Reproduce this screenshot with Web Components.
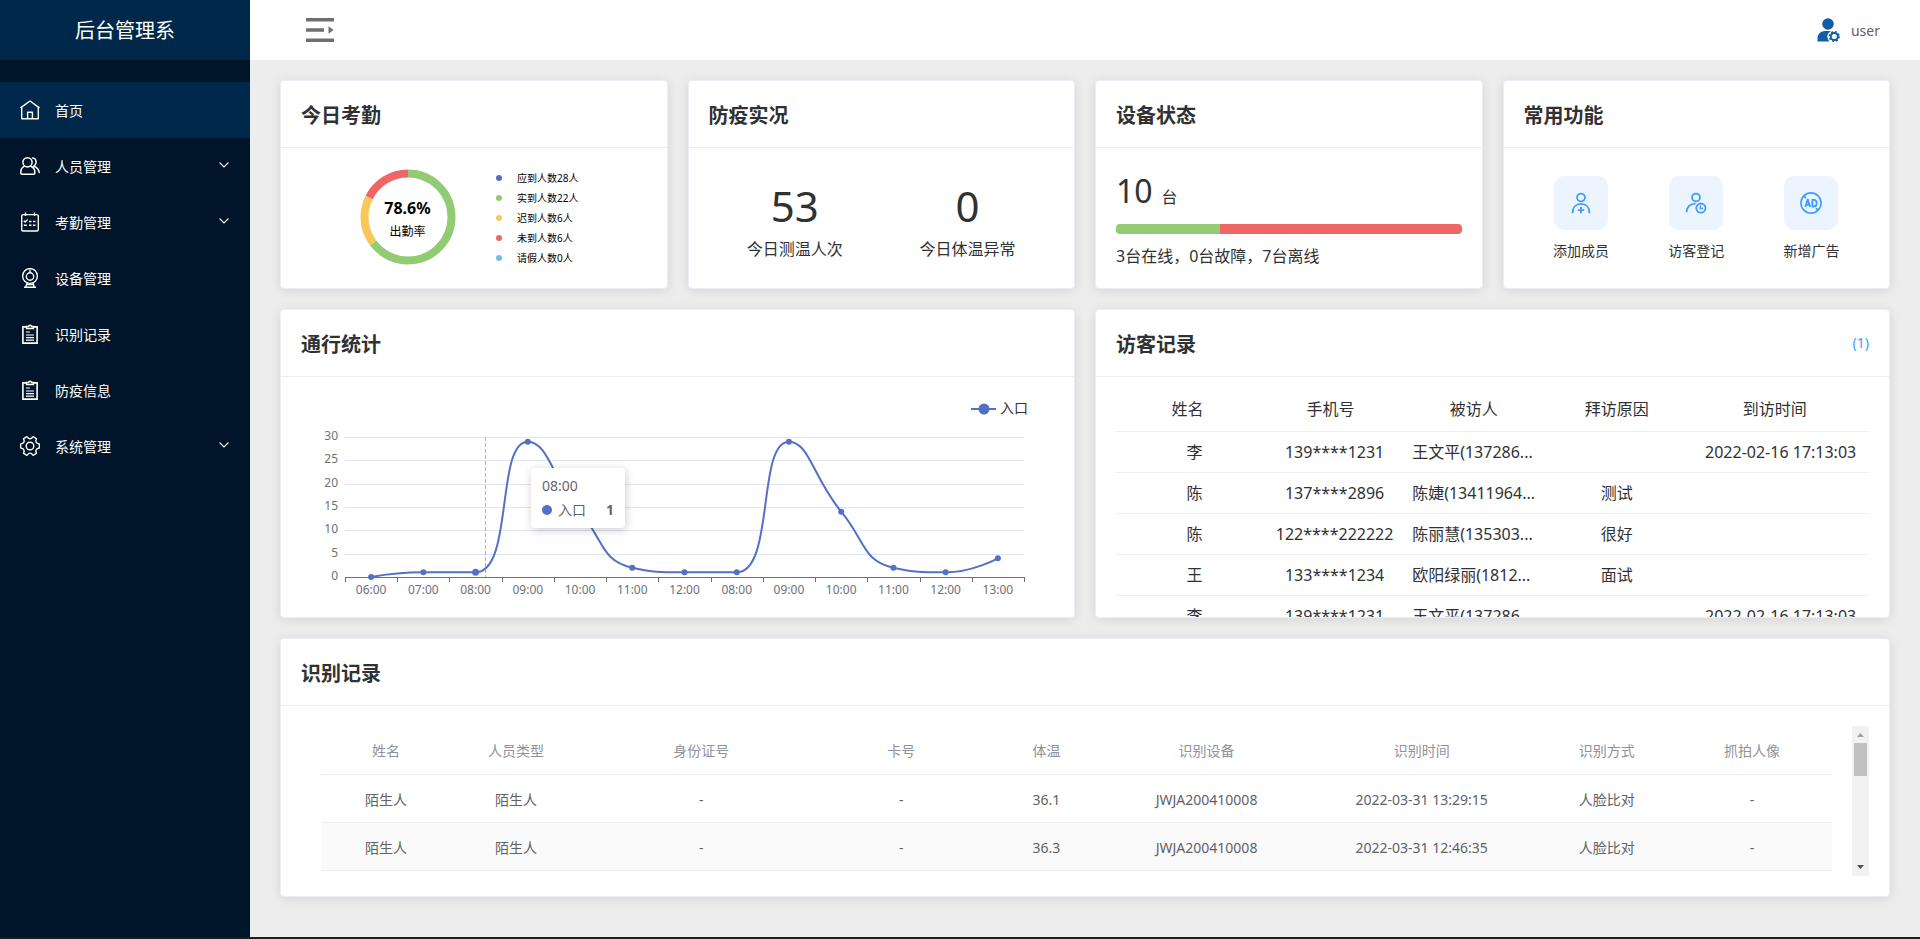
<!DOCTYPE html>
<html lang="zh-CN">
<head>
<meta charset="utf-8">
<title>后台管理系</title>
<style>
  html, body { margin: 0; height: 100%; }
  body {
    font-family: "Noto Sans", "Noto Sans CJK SC", sans-serif;
    font-size: 14px;
    line-height: 20px;
    color: #303133;
    background: #ededed;
  }
</style>
</head>
<body>
<admin-shell>
  <side-nav slot="side" heading="后台管理系">
    <nav-item icon="home" current>首页</nav-item>
    <nav-item icon="people" expandable>人员管理</nav-item>
    <nav-item icon="calendar" expandable>考勤管理</nav-item>
    <nav-item icon="camera">设备管理</nav-item>
    <nav-item icon="clipboard">识别记录</nav-item>
    <nav-item icon="clipboard">防疫信息</nav-item>
    <nav-item icon="gear" expandable>系统管理</nav-item>
  </side-nav>
  <top-bar slot="top">user</top-bar>
  <dash-grid>
    <dash-card heading="今日考勤"><attendance-ring></attendance-ring></dash-card>
    <dash-card heading="防疫实况">
      <item-row>
        <stat-figure value="53">今日测温人次</stat-figure>
        <stat-figure value="0">今日体温异常</stat-figure>
      </item-row>
    </dash-card>
    <dash-card heading="设备状态"><device-status online="3" faulty="0" offline="7"></device-status></dash-card>
    <dash-card heading="常用功能">
      <item-row>
        <quick-action icon="addUser">添加成员</quick-action>
        <quick-action icon="visitor">访客登记</quick-action>
        <quick-action icon="ad">新增广告</quick-action>
      </item-row>
    </dash-card>
    <dash-card heading="通行统计" size="half"><traffic-chart></traffic-chart></dash-card>
    <dash-card heading="访客记录" size="half">
      <count-link slot="extra">(1)</count-link>
      <visitor-table></visitor-table>
    </dash-card>
    <dash-card heading="识别记录" size="full"><record-table></record-table></dash-card>
  </dash-grid>
</admin-shell>

<script>
const ICONS = {
  home: `<svg viewBox="0 0 20 20" fill="none" stroke="currentColor" stroke-width="1.4" stroke-linejoin="round" stroke-linecap="round"><path d="M.9 7.6 10 1l9.1 6.6"/><path d="M1.7 7.2V18.7h16.6V7.2M7.6 18.5v-6.3h4.8v6.3"/></svg>`,
  people: `<svg viewBox="0 0 20 20" fill="none" stroke="currentColor" stroke-width="1.5" stroke-linecap="round" stroke-linejoin="round"><circle cx="7.5" cy="6.3" r="4.6"/><path d="M4.4 10.2C2 11.5.8 13.4.8 15.8v1.2c0 .8.4 1.2 1.2 1.2h11.6c.8 0 1.2-.4 1.2-1.2v-1.2c0-2.4-1.6-4.4-3.9-5.5M12.6 2c2.1.3 3.500 2 3.500 4.2 0 1.9-.9 3.2-2.4 4 3.3 1 5 3 5.5 6.3"/></svg>`,
  calendar: `<svg viewBox="0 0 20 20" fill="none" stroke="currentColor" stroke-width="1.4"><rect x="1.7" y="2.6" width="16.6" height="16.4" rx="1.5"/><path d="M5.5.5v3.600M14.5.5v3.600M3.800 8.700l1.300 1.400 2.500-2.600M3.800 13.200h3M9 9.500h2.500M13 9.500h2.500M9 13.200h2.500M13 13.200h2.500"/></svg>`,
  camera: `<svg viewBox="0 0 20 20" fill="none" stroke="currentColor" stroke-width="1.4"><circle cx="10" cy="8" r="7.4"/><circle cx="10" cy="8.5" r="3.7"/><path d="M10 1.500v3M7 15l-1.200 4M13 15l1.200 4M4 19.200h12M7 16.500h6"/></svg>`,
  clipboard: `<svg viewBox="0 0 20 20" fill="none" stroke="currentColor" stroke-width="1.6"><path d="M6 2.900H2.900v16.200h14.200V2.900H14"/><path d="M6.600 4.400V2.500h2C8.600.8 11.400.8 11.400 2.500h2v1.900z" stroke-width="1.5"/><path d="M6 8h4M6 11h8M6 13.600h8M6 16.200h8" stroke-width="1.2"/></svg>`,
  gear: `<svg viewBox="0 0 20 20" fill="none" stroke="currentColor" stroke-width="1.4" stroke-linejoin="round"><circle cx="10" cy="10" r="3.8"/><path d="M6.500.9c.4-.2.8-.1 1 .3.600 1.100 1.400 1.700 2.500 1.700s1.900-.6 2.500-1.700c.2-.4.6-.5 1-.3l2.500 1.500c.4.2.5.6.3 1-.6 1.100-.6 2 0 3 .5.900 1.200 1.300 2.300 1.300.5 0 .8.300.8.800v3c0 .5-.3.800-.8.800-1.100 0-1.800.4-2.300 1.300-.6 1-.6 1.900 0 3 .2.400.1.800-.3 1l-2.500 1.500c-.4.2-.8.1-1-.3-.6-1.100-1.400-1.700-2.500-1.700s-1.900.6-2.500 1.700c-.2.4-.6.5-1 .3L4 17.600c-.4-.2-.5-.6-.3-1 .6-1.100.6-2 0-3-.5-.9-1.200-1.300-2.300-1.300-.5 0-.8-.3-.8-.8v-3c0-.5.3-.8.8-.8 1.100 0 1.800-.4 2.300-1.300.6-1 .6-1.900 0-3-.2-.4-.1-.8.3-1z"/></svg>`,
  chevron: `<svg viewBox="0 0 10 10" fill="none" stroke="currentColor" stroke-width="1.1"><path d="M.5 1.500 5 6l4.500-4.500"/></svg>`,
  fold: `<svg viewBox="0 0 28 24" fill="#6f6f6f"><path d="M0 0h28v3.500H0zM0 10.300h18v3.400H0zM0 20.500h28V24H0zM22.500 8.200l5 3.800-5 3.800z"/></svg>`,
  account: `<svg viewBox="0 0 24 24" fill="#0f5ea8"><circle cx="11" cy="6" r="5.800"/><path d="M.5 23.500v-3C.5 16 4 13 8 13h6c-2 1.200-3.600 3-3.600 5.300 0 2.100.8 3.800 2 5.200H2z"/><circle cx="17.3" cy="18.5" r="3.6" fill="none" stroke="#0f5ea8" stroke-width="2"/><circle cx="17.3" cy="18.5" r="4.7" fill="none" stroke="#0f5ea8" stroke-width="1.800" stroke-dasharray="1.850 1.840"/></svg>`,
  addUser: `<svg viewBox="0 0 24 24" fill="none" stroke="#409eff" stroke-width="2"><circle cx="12" cy="6" r="4.300"/><path d="M2.700 23.200C2.700 16.500 6.500 13 12 13s9.300 3.500 9.300 10.200M12 16.300v7M8.500 19.800h7"/></svg>`,
  visitor: `<svg viewBox="0 0 24 24" fill="none" stroke="#409eff" stroke-width="2"><circle cx="12" cy="6" r="4.300"/><path d="M1.700 22C2 15.800 5.500 12.800 11.500 12.600"/><circle cx="17.3" cy="17.5" r="5"/><path d="M16.800 14.600v3.400h2.900" stroke-width="1.6"/></svg>`,
  ad: `<svg viewBox="0 0 24 24" fill="none" stroke="#409eff" stroke-width="1.800"><circle cx="12" cy="12" r="11"/><path d="m5.800 16.300 2.500-8h.3l2.500 8M6.500 14h4M13.500 8.500v7.300h1.700c4 0 4-7.300 0-7.300z" stroke-width="2"/><path d="m4.400 4.400 2.100 2.200M17.500 17.500l2.100 2.200" stroke-width="2"/></svg>`
};

class BaseElement extends HTMLElement {
  constructor() {
    super();
    this.attachShadow({ mode: 'open' });
  }
  paint(css, html) {
    this.shadowRoot.innerHTML = `<style>*{box-sizing:border-box}svg{display:block}${css}</style>${html}`;
  }
}

customElements.define('admin-shell', class extends BaseElement {
  connectedCallback() {
    this.paint(`
      :host { display: grid; min-height: 100vh; grid-template-columns: 250px minmax(0, 1fr); grid-template-rows: 60px 1fr 2px; }
      .side { grid-row: 1 / 3; display: grid; background: #001529; }
      main { padding: 20px 30px; }
      .edge { grid-column: 1 / 3; background: #1f1b1e; }`,
      `<div class="side"><slot name="side"></slot></div><slot name="top"></slot><main><slot></slot></main><div class="edge"></div>`);
  }
});

customElements.define('side-nav', class extends BaseElement {
  connectedCallback() {
    this.paint(`
      :host { display: block; color: #fff; }
      h1 { margin: 0 0 22px; height: 60px; padding-top: 2px; font-size: 20px; font-weight: 400; line-height: 58px; text-align: center; background: #00284a; }
      nav { display: grid; }`,
      `<h1>${this.getAttribute('heading')}</h1><nav><slot></slot></nav>`);
  }
});

customElements.define('nav-item', class extends BaseElement {
  connectedCallback() {
    const open = this.hasAttribute('expandable');
    const inner = `${ICONS[this.getAttribute('icon')]}<span><slot></slot></span>${open ? ICONS.chevron : ''}`;
    this.paint(`
      :host { display: block; }
      :host([current]) { background: #00284a; }
      a, button { display: grid; grid-template-columns: 20px 1fr 10px; column-gap: 15px; align-items: center; width: 100%; height: 56px; padding: 0 21px 0 20px; border: 0; background: none; color: #fff; font: inherit; text-align: left; text-decoration: none; cursor: pointer; }
      span { padding-top: 2px; }`,
      open ? `<button type="button" aria-expanded="false">${inner}</button>` : `<a href="#">${inner}</a>`);
  }
});

customElements.define('top-bar', class extends BaseElement {
  connectedCallback() {
    this.paint(`
      :host { display: flex; justify-content: space-between; align-items: center; padding: 0 40px 0 56px; background: #fff; color: #5f6267; }
      button { display: flex; align-items: center; gap: 10px; padding: 0; border: 0; background: none; color: inherit; font: inherit; cursor: pointer; }
      .fold svg { width: 28px; height: 24px; }
      .user svg { width: 24px; height: 24px; }
      span { padding-top: 2px; }`,
      `<button class="fold" type="button" aria-label="折叠菜单">${ICONS.fold}</button>
       <button class="user" type="button">${ICONS.account}<span><slot></slot></span></button>`);
  }
});

customElements.define('dash-grid', class extends BaseElement {
  connectedCallback() {
    this.paint(`:host { display: grid; grid-template-columns: repeat(4, minmax(0, 1fr)); gap: 20px; }`, `<slot></slot>`);
  }
});

customElements.define('dash-card', class extends BaseElement {
  connectedCallback() {
    this.paint(`
      :host { display: flex; flex-direction: column; height: 209px; box-sizing: border-box; border: 1px solid #ebeef5; border-radius: 4px; overflow: hidden; background: #fff; box-shadow: 0 2px 12px rgba(0, 0, 0, .1); }
      :host([size=half]) { grid-column: span 2; height: 309px; }
      :host([size=full]) { grid-column: span 4; height: 259px; }
      header { flex: none; display: flex; justify-content: space-between; align-items: center; height: 67px; padding: 0 20px; border-bottom: 1px solid #ebeef5; }
      h2 { margin: 0; padding-top: 4px; font-size: 20px; line-height: 28px; }
      section { flex: 1; min-height: 0; padding: 0 20px; display: grid; }`,
      `<header><h2>${this.getAttribute('heading')}</h2><slot name="extra"></slot></header><section><slot></slot></section>`);
  }
});

customElements.define('count-link', class extends BaseElement {
  connectedCallback() {
    this.paint(`:host { display: block; } a { color: #409eff; text-decoration: none; }`, `<a href="#"><slot></slot></a>`);
  }
});

customElements.define('item-row', class extends BaseElement {
  connectedCallback() {
    this.paint(`:host { display: grid; grid-auto-flow: column; grid-auto-columns: minmax(0, 1fr); }`, `<slot></slot>`);
  }
});

customElements.define('stat-figure', class extends BaseElement {
  connectedCallback() {
    this.paint(`
      :host { display: block; padding-top: 30px; text-align: center; font-size: 16px; line-height: 24px; }
      strong { display: block; padding-bottom: 3px; font-size: 42px; font-weight: 400; line-height: 56px; }`,
      `<strong>${this.getAttribute('value')}</strong><slot></slot>`);
  }
});

customElements.define('quick-action', class extends BaseElement {
  connectedCallback() {
    this.paint(`
      :host { display: grid; justify-content: center; align-content: start; padding-top: 28px; }
      button { display: grid; justify-items: center; gap: 11px; padding: 0; border: 0; background: none; color: inherit; font: inherit; cursor: pointer; }
      i { display: grid; place-items: center; width: 54px; height: 54px; border-radius: 10px; background: #ecf4ff; }
      svg { width: 22px; height: 22px; }`,
      `<button type="button"><i>${ICONS[this.getAttribute('icon')]}</i><slot></slot></button>`);
  }
});

customElements.define('attendance-ring', class extends BaseElement {
  connectedCallback() {
    const legend = [['#5470c6', '应到人数28人'], ['#91cc75', '实到人数22人'], ['#fac858', '迟到人数6人'], ['#ee6666', '未到人数6人'], ['#73c0de', '请假人数0人']];
    const parts = [[22, '#91cc75'], [6, '#fac858'], [6, '#ee6666']];
    const length = 2 * Math.PI * 43.5;
    let start = 0;
    const arcs = parts.map(([n, c]) => {
      const part = length * n / 34;
      const s = `<circle cx="48" cy="48" r="43.5" stroke="${c}" stroke-dasharray="${part} ${length}" stroke-dashoffset="${-start}"/>`;
      start += part;
      return s;
    }).join('');
    this.paint(`
      :host { display: grid; grid-template-columns: 195px 1fr; align-items: center; color: #000; }
      .ring { display: grid; place-items: center; padding: 0 0 2px 18px; }
      .ring > * { grid-area: 1 / 1; }
      .ring svg { width: 96px; height: 96px; transform: rotate(-90deg); }
      .label { text-align: center; font-size: 12px; line-height: 24px; padding-top: 6px; }
      .label b { display: block; font-size: 16px; }
      ul { margin: 0; padding: 0; list-style: none; font-size: 10px; }
      li { display: flex; align-items: center; gap: 15px; }
      li i { width: 6px; height: 6px; border-radius: 50%; }`,
      `<div class="ring"><svg viewBox="0 0 96 96" fill="none" stroke-width="8">${arcs}</svg><div class="label"><b>78.6%</b>出勤率</div></div>
       <ul>${legend.map(([c, t]) => `<li><i style="background:${c}"></i>${t}</li>`).join('')}</ul>`);
  }
});

customElements.define('device-status', class extends BaseElement {
  connectedCallback() {
    const [on, bad, off] = ['online', 'faulty', 'offline'].map(k => +this.getAttribute(k));
    this.paint(`
      :host { display: block; padding-top: 20px; font-size: 16px; line-height: 24px; }
      .total { height: 56px; line-height: 46px; }
      .total b { font-size: 32px; font-weight: 400; margin-right: 9px; }
      .bar { display: flex; height: 10px; border-radius: 4px; overflow: hidden; margin-bottom: 10px; }
      .on { flex: ${on}; background: #91cc75; } .bad { flex: ${bad}; background: #fac858; } .off { flex: ${off}; background: #ee6666; }`,
      `<div class="total"><b>${on + bad + off}</b>台</div>
       <div class="bar"><span class="on"></span><span class="bad"></span><span class="off"></span></div>
       <div>${on}台在线，${bad}台故障，${off}台离线</div>`);
  }
});

customElements.define('traffic-chart', class extends BaseElement {
  connectedCallback() {
    this.paint(`
      :host { display: block; position: relative; min-width: 0; }
      svg { width: 100%; height: 240px; font-size: 12px; fill: #6e7079; }
      .tip { position: absolute; left: 230px; top: 91px; display: grid; gap: 4px; padding: 8px 11px; border-radius: 4px; background: #fff; color: #666; box-shadow: 1px 2px 10px rgba(0, 0, 0, .2); }
      .tip div { display: flex; align-items: center; gap: 6px; }
      .tip i { width: 10px; height: 10px; border-radius: 50%; background: #5470c6; }
      .tip b { margin-left: 14px; }`,
      `<svg></svg><div class="tip"><span>08:00</span><div><i></i>入口<b>1</b></div></div>`);
    this.draw();
    new ResizeObserver(() => this.draw()).observe(this);
  }
  draw() {
    const svg = this.shadowRoot.querySelector('svg');
    const left = 44, right = Math.round(this.clientWidth) - 30, top = 60, bottom = 200;
    const hours = ['06', '07', '08', '09', '10', '11', '12', '08', '09', '10', '11', '12', '13'];
    const data = [0, 1, 1, 29, 14, 2, 1, 1, 29, 14, 2, 1, 4];
    const step = (right - left) / hours.length;
    const pts = data.map((v, i) => [left + step * (i + .5), bottom - v * (bottom - top) / 30]);
    let out = '';
    for (let v = 0; v <= 30; v += 5) {
      const y = Math.round(bottom - v * (bottom - top) / 30);
      if (v) out += `<path d="M${left} ${y + .5}H${right}" stroke="#e0e6f1"/>`;
      out += `<text x="${left - 7}" y="${y + 3}" text-anchor="end">${v}</text>`;
    }
    out += `<path d="M${left} ${bottom + .5}H${right}" stroke="#6e7079"/>`;
    for (let i = 0; i <= hours.length; i++) out += `<path d="M${Math.round(left + step * i) + .5} ${bottom}v5" stroke="#6e7079"/>`;
    hours.forEach((h, i) => out += `<text x="${pts[i][0]}" y="${bottom + 17}" text-anchor="middle">${h}:00</text>`);
    const px = Math.round(left + (right - left) * .206) + .5;
    out += `<path d="M${px} ${top}V${bottom}" stroke="#b0b2b8" stroke-dasharray="4 2"/>`;
    out += `<path d="${this.curve(pts)}" fill="none" stroke="#5470c6" stroke-width="2"/>`;
    pts.forEach(([x, y], i) => out += `<circle cx="${x}" cy="${y}" r="${i === 2 ? 3.5 : 3}" fill="#5470c6"/>`);
    out += `<path d="M${right - 53} 32h25" stroke="#5470c6" stroke-width="2"/><circle cx="${right - 40}" cy="32" r="5.5" fill="#5470c6"/>`;
    out += `<text x="${right - 24}" y="36" font-size="14" fill="#333">入口</text>`;
    svg.innerHTML = out;
  }
  /* Smooth line whose control points stay between neighbouring values. */
  curve(p) {
    const clamp = (v, a, b) => Math.max(Math.min(v, Math.max(a, b)), Math.min(a, b));
    let d = `M${p[0]}`, c0 = p[0];
    for (let i = 1; i < p.length; i++) {
      const a = p[i - 1], b = p[i], n = p[i + 1];
      let c1 = b, next = b;
      if (n) {
        const lp = Math.hypot(b[0] - a[0], b[1] - a[1]), ln = Math.hypot(n[0] - b[0], n[1] - b[1]);
        const r = ln / (ln + lp);
        next = [0, 1].map(k => clamp(b[k] + (n[k] - a[k]) * .5 * r, n[k], b[k]));
        c1 = [0, 1].map(k => clamp(b[k] - (next[k] - b[k]) * lp / ln, a[k], b[k]));
        next = [0, 1].map(k => b[k] + (b[k] - c1[k]) * ln / lp);
      }
      d += `C${c0} ${c1} ${b}`;
      c0 = next;
    }
    return d;
  }
});

customElements.define('visitor-table', class extends BaseElement {
  connectedCallback() {
    const rows = [
      ['李', '139****1231', '王文平(137286...', '', '2022-02-16 17:13:03'],
      ['陈', '137****2896', '陈婕(13411964...', '测试', ''],
      ['陈', '122****222222', '陈丽慧(135303...', '很好', ''],
      ['王', '133****1234', '欧阳绿丽(1812...', '面试', ''],
      ['李', '139****1231', '王文平(137286...', '', '2022-02-16 17:13:03']
    ];
    this.paint(`
      :host { display: block; padding-top: 10px; min-width: 0; }
      table { width: 100%; table-layout: fixed; border-collapse: separate; border-spacing: 0; font-size: 16px; }
      th, td { height: 41px; padding: 0; border-bottom: 1px solid #ebeef5; text-align: center; font-weight: 400; white-space: nowrap; }
      th { height: 45px; }
      th:last-child { padding-right: 8px; width: 24%; }
      td:first-child { padding-left: 14px; }
      td:nth-child(2) { padding-left: 8px; }
      td:last-child { padding-left: 4px; }
      td:nth-child(3) { padding-left: 10px; text-align: left; }`,
      `<table><thead><tr>${['姓名', '手机号', '被访人', '拜访原因', '到访时间'].map(t => `<th>${t}</th>`).join('')}</tr></thead>
       <tbody>${rows.map(r => `<tr>${r.map(t => `<td>${t}</td>`).join('')}</tr>`).join('')}</tbody></table>`);
  }
});

customElements.define('record-table', class extends BaseElement {
  connectedCallback() {
    const cols = [['姓名', 130], ['人员类型', 130], ['身份证号', 240], ['卡号', 160], ['体温', 130], ['识别设备', 190], ['识别时间', 240], ['识别方式', 130], ['抓拍人像', 160]];
    const rows = [
      ['陌生人', '陌生人', '-', '-', '36.1', 'JWJA200410008', '2022-03-31 13:29:15', '人脸比对', '-'],
      ['陌生人', '陌生人', '-', '-', '36.3', 'JWJA200410008', '2022-03-31 12:46:35', '人脸比对', '-']
    ];
    this.paint(`
      :host { display: grid; grid-template-columns: minmax(0, 1fr) 17px; column-gap: 20px; padding: 20px 0 0 20px; align-content: start; align-items: start; }
      table { width: 100%; table-layout: fixed; border-collapse: separate; border-spacing: 0; color: #606266; }
      th, td { height: 48px; padding: 2px 0 0; border-bottom: 1px solid #ebeef5; text-align: center; font-weight: 400; white-space: nowrap; }
      th { height: 49px; color: #909399; }
      tr:nth-child(even) td { background: #fafafa; }
      .scroll { display: flex; flex-direction: column; align-items: center; height: 150px; background: #f1f1f1; }
      .scroll svg { width: 17px; height: 17px; }
      .thumb { width: 13px; height: 33px; background: #c1c1c1; margin-bottom: auto; }`,
      `<table><colgroup>${cols.map(c => `<col style="width:${c[1]}px">`).join('')}</colgroup>
       <thead><tr>${cols.map(c => `<th>${c[0]}</th>`).join('')}</tr></thead>
       <tbody>${rows.map(r => `<tr>${r.map(t => `<td>${t}</td>`).join('')}</tr>`).join('')}</tbody></table>
       <div class="scroll" aria-hidden="true"><svg viewBox="0 0 17 17" fill="#a3a3a3"><path d="M5 11h7L8.500 7z"/></svg><div class="thumb"></div><svg viewBox="0 0 17 17" fill="#505050"><path d="M5 6h7l-3.500 4z"/></svg></div>`);
  }
});
</script>
</body>
</html>
